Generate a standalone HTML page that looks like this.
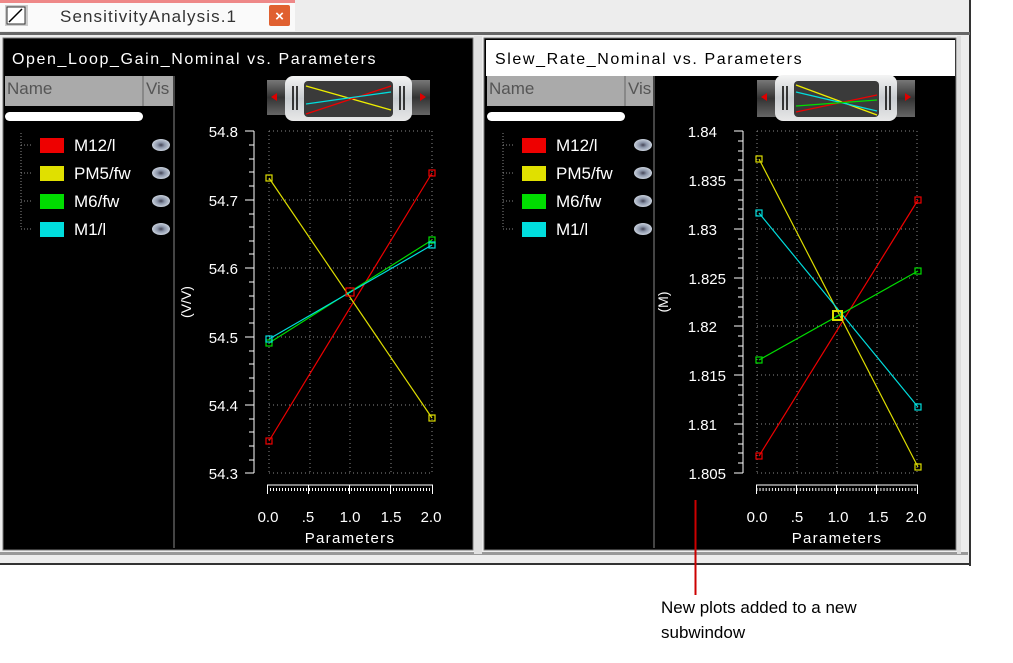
<!DOCTYPE html>
<html><head><meta charset="utf-8"><style>
html,body{margin:0;padding:0;background:#fff;}
svg{display:block;font-family:"Liberation Sans",sans-serif;}
</style></head><body>
<svg width="1013" height="663" viewBox="0 0 1013 663" xmlns="http://www.w3.org/2000/svg">
<defs>
<pattern id="rl" width="3" height="8" patternUnits="userSpaceOnUse"><rect x="0" y="0" width="1" height="6" fill="#fff"/></pattern>
<pattern id="rr" width="3.1" height="8" patternUnits="userSpaceOnUse"><rect x="0" y="0" width="1" height="6" fill="#fff"/></pattern>
<linearGradient id="knob" x1="0" y1="0" x2="0" y2="1"><stop offset="0" stop-color="#f4f4f4"/><stop offset="0.5" stop-color="#c8ccd0"/><stop offset="1" stop-color="#e8e8e8"/></linearGradient>
<linearGradient id="trk" x1="0" y1="0" x2="0" y2="1"><stop offset="0" stop-color="#777"/><stop offset="0.5" stop-color="#333"/><stop offset="1" stop-color="#666"/></linearGradient>
<radialGradient id="eye"><stop offset="0" stop-color="#445"/><stop offset="0.4" stop-color="#8a94a8"/><stop offset="1" stop-color="#c8d0dc"/></radialGradient>
</defs>
<rect x="0" y="0" width="1013" height="663" fill="#fff"/>
<rect x="0" y="0" width="970" height="565" fill="#ededed"/>
<rect x="969" y="0" width="2" height="566" fill="#333"/>
<rect x="0" y="563" width="971" height="2" fill="#333"/>
<rect x="0" y="552" width="968" height="3" fill="#999"/>
<rect x="0" y="0" width="295" height="31" fill="#fafafa"/>
<rect x="0" y="0" width="295" height="3" fill="#e88"/>
<rect x="5" y="5" width="23" height="21" fill="#ccc"/>
<rect x="7" y="7" width="18" height="17" fill="#fff" stroke="#333" stroke-width="1"/>
<line x1="9" y1="22" x2="22" y2="9" stroke="#000" stroke-width="1.5"/>
<text x="60" y="22" font-size="17" fill="#333" letter-spacing="1.1">SensitivityAnalysis.1</text>
<rect x="269" y="5" width="21" height="21" rx="2" fill="#e06030"/>
<text x="279.5" y="21" font-size="15" font-weight="bold" fill="#fff" text-anchor="middle">×</text>
<rect x="0" y="32" width="970" height="3" fill="#666"/>
<rect x="3" y="38" width="470" height="512" fill="#000" stroke="#777"/>
<text x="12" y="64" font-size="16" fill="#fff" letter-spacing="1.6">Open_Loop_Gain_Nominal vs. Parameters</text>
<rect x="5" y="76" width="169" height="30" fill="#aaa"/>
<rect x="142" y="76" width="2" height="30" fill="#888"/>
<text x="7" y="94" font-size="17" fill="#555">Name</text>
<text x="146" y="94" font-size="17" fill="#555">Vis</text>
<rect x="173" y="76" width="2" height="472" fill="#444"/>
<rect x="5" y="112" width="138" height="9" rx="4.5" fill="#fff"/>
<rect x="484" y="38" width="472" height="512" fill="#000" stroke="#777"/>
<rect x="486" y="40" width="469" height="36" fill="#fff"/>
<text x="495" y="64" font-size="16" fill="#000" letter-spacing="1.6">Slew_Rate_Nominal vs. Parameters</text>
<rect x="487" y="76" width="167" height="30" fill="#aaa"/>
<rect x="624" y="76" width="2" height="30" fill="#888"/>
<text x="489" y="94" font-size="17" fill="#555">Name</text>
<text x="628" y="94" font-size="17" fill="#555">Vis</text>
<rect x="653" y="76" width="2" height="472" fill="#444"/>
<rect x="487" y="112" width="138" height="9" rx="4.5" fill="#fff"/>
<rect x="474" y="36" width="8" height="518" fill="#e0e0e0"/>
<rect x="957" y="36" width="4" height="518" fill="#ddd"/>

<g font-size="17" fill="#fff">
<path d="M21,133 V229 M21,145 H33 M21,173 H33 M21,201 H33 M21,229 H33" stroke="#888" stroke-dasharray="1,2" fill="none"/>
<rect x="40" y="138" width="24" height="15" fill="#e00"/><text x="74" y="151">M12/l</text>
<rect x="40" y="166" width="24" height="15" fill="#e0e000"/><text x="74" y="179">PM5/fw</text>
<rect x="40" y="194" width="24" height="15" fill="#00dd00"/><text x="74" y="207">M6/fw</text>
<rect x="40" y="222" width="24" height="15" fill="#00dddd"/><text x="74" y="235">M1/l</text>
<g fill="url(#eye)"><ellipse cx="161" cy="145" rx="9" ry="6"/><ellipse cx="161" cy="173" rx="9" ry="6"/><ellipse cx="161" cy="201" rx="9" ry="6"/><ellipse cx="161" cy="229" rx="9" ry="6"/></g>
</g>
<g font-size="17" fill="#fff" transform="translate(482,0)">
<path d="M21,133 V229 M21,145 H33 M21,173 H33 M21,201 H33 M21,229 H33" stroke="#888" stroke-dasharray="1,2" fill="none"/>
<rect x="40" y="138" width="24" height="15" fill="#e00"/><text x="74" y="151">M12/l</text>
<rect x="40" y="166" width="24" height="15" fill="#e0e000"/><text x="74" y="179">PM5/fw</text>
<rect x="40" y="194" width="24" height="15" fill="#00dd00"/><text x="74" y="207">M6/fw</text>
<rect x="40" y="222" width="24" height="15" fill="#00dddd"/><text x="74" y="235">M1/l</text>
<g fill="url(#eye)"><ellipse cx="161" cy="145" rx="9" ry="6"/><ellipse cx="161" cy="173" rx="9" ry="6"/><ellipse cx="161" cy="201" rx="9" ry="6"/><ellipse cx="161" cy="229" rx="9" ry="6"/></g>
</g>

<g transform="translate(267,80)">
<rect x="0" y="0" width="163" height="35" fill="url(#trk)"/>
<polygon points="4,17 10,13 10,21" fill="#d00"/><polygon points="159,17 153,13 153,21" fill="#d00"/>
<rect x="18" y="-4" width="127" height="45" rx="8" fill="url(#knob)"/>
<rect x="37" y="1" width="89" height="36" rx="4" fill="#3a3a3a"/>
<path d="M26,6 V30 M30,6 V30 M133,6 V30 M137,6 V30" stroke="#000" stroke-width="1.5"/>
<line x1="39" y1="6" x2="124" y2="30" stroke="#ee0" stroke-width="1.3"/>
<line x1="39" y1="34" x2="124" y2="6" stroke="#e00" stroke-width="1.3"/>
<line x1="39" y1="24" x2="124" y2="12" stroke="#0dd" stroke-width="1.3"/>
</g>
<g transform="translate(757,80)">
<rect x="0" y="0" width="158" height="37" fill="url(#trk)"/>
<polygon points="4,17 10,13 10,21" fill="#d00"/><polygon points="154,17 148,13 148,21" fill="#d00"/>
<rect x="18" y="-5" width="122" height="46" rx="8" fill="url(#knob)"/>
<rect x="37" y="1" width="85" height="36" rx="4" fill="#3a3a3a"/>
<path d="M26,6 V30 M30,6 V30 M129,6 V30 M133,6 V30" stroke="#000" stroke-width="1.5"/>
<line x1="39" y1="5" x2="120" y2="35" stroke="#ee0" stroke-width="1.3"/>
<line x1="39" y1="12" x2="120" y2="31" stroke="#0dd" stroke-width="1.3"/>
<line x1="39" y1="32" x2="120" y2="15" stroke="#e00" stroke-width="1.3"/>
<line x1="39" y1="26" x2="120" y2="20" stroke="#0d0" stroke-width="1.3"/>
</g>

<g stroke="#888" stroke-dasharray="1,3" fill="none">
<path d="M269,131 H432 M269,200 H432 M269,268 H432 M269,337 H432 M269,405 H432 M269,473 H432"/>
<path d="M269,131 V473 M310,131 V473 M350,131 V473 M391,131 V473 M432,131 V473"/>
</g>
<g stroke="#fff" fill="none">
<path d="M254,131 V473 M245,131 H254 M245,200 H254 M245,268 H254 M245,337 H254 M245,405 H254 M245,473 H254"/>
<path d="M249,145 H254 M249,159 H254 M249,172 H254 M249,186 H254 M249,214 H254 M249,227 H254 M249,241 H254 M249,254 H254 M249,282 H254 M249,296 H254 M249,309 H254 M249,323 H254 M249,351 H254 M249,364 H254 M249,378 H254 M249,391 H254 M249,419 H254 M249,432 H254 M249,446 H254 M249,460 H254"/>
<path d="M267,485 H433 M267.5,485 V494 M308.5,485 V494 M349.5,485 V494 M390.5,485 V494 M432.5,485 V494"/>
</g>
<rect x="268" y="486" width="165" height="5" fill="url(#rl)"/>
<g fill="#fff" font-size="15" text-anchor="end">
<text x="238" y="137">54.8</text><text x="238" y="206">54.7</text><text x="238" y="274">54.6</text><text x="238" y="343">54.5</text><text x="238" y="411">54.4</text><text x="238" y="479">54.3</text>
</g>
<g fill="#fff" font-size="15" text-anchor="middle">
<text x="268" y="522">0.0</text><text x="308" y="522">.5</text><text x="350" y="522">1.0</text><text x="391" y="522">1.5</text><text x="431" y="522">2.0</text>
<text x="350" y="543" letter-spacing="1.3">Parameters</text>
<text transform="translate(191,302) rotate(-90)" font-size="14">(V/V)</text>
</g>
<g stroke-width="1.2" fill="none">
<line x1="269" y1="441" x2="432" y2="173" stroke="#e00"/>
<line x1="269" y1="178" x2="432" y2="418" stroke="#dd0"/>
<line x1="269" y1="343" x2="432" y2="240" stroke="#0d0"/>
<line x1="269" y1="339" x2="432" y2="245" stroke="#0dd"/>
<rect x="266" y="438" width="6" height="6" stroke="#e00"/><rect x="429" y="170" width="6" height="6" stroke="#e00"/>
<rect x="266" y="175" width="6" height="6" stroke="#dd0"/><rect x="429" y="415" width="6" height="6" stroke="#dd0"/>
<rect x="266" y="340" width="6" height="6" stroke="#0d0"/><rect x="429" y="237" width="6" height="6" stroke="#0d0"/>
<rect x="266" y="336" width="6" height="6" stroke="#0dd"/><rect x="429" y="242" width="6" height="6" stroke="#0dd"/>
<rect x="346" y="288" width="8" height="8" stroke="#e00"/>
</g>

<g stroke="#888" stroke-dasharray="1,3" fill="none">
<path d="M757,131 H917 M757,180 H917 M757,229 H917 M757,278 H917 M757,326 H917 M757,375 H917 M757,424 H917 M757,473 H917"/>
<path d="M757,131 V473 M797,131 V473 M837,131 V473 M877,131 V473 M917,131 V473"/>
</g>
<g stroke="#fff" fill="none">
<path d="M743,131 V473 M734,131 H743 M734,180 H743 M734,229 H743 M734,278 H743 M734,326 H743 M734,375 H743 M734,424 H743 M734,473 H743"/>
<path d="M738,141 H743 M738,151 H743 M738,160 H743 M738,170 H743 M738,190 H743 M738,200 H743 M738,209 H743 M738,219 H743 M738,239 H743 M738,249 H743 M738,258 H743 M738,268 H743 M738,288 H743 M738,297 H743 M738,307 H743 M738,317 H743 M738,336 H743 M738,346 H743 M738,356 H743 M738,366 H743 M738,385 H743 M738,395 H743 M738,405 H743 M738,414 H743 M738,434 H743 M738,444 H743 M738,453 H743 M738,463 H743"/>
<path d="M756,485 H918 M756.5,485 V494 M796.5,485 V494 M836.5,485 V494 M876.5,485 V494 M917.5,485 V494"/>
</g>
<rect x="757" y="486" width="160" height="5" fill="url(#rr)"/>
<g fill="#fff" font-size="15" text-anchor="end">
<text x="717" y="137">1.84</text><text x="726" y="186">1.835</text><text x="717" y="235">1.83</text><text x="726" y="284">1.825</text><text x="717" y="332">1.82</text><text x="726" y="381">1.815</text><text x="717" y="430">1.81</text><text x="726" y="479">1.805</text>
</g>
<g fill="#fff" font-size="15" text-anchor="middle">
<text x="757" y="522">0.0</text><text x="797" y="522">.5</text><text x="838" y="522">1.0</text><text x="878" y="522">1.5</text><text x="916" y="522">2.0</text>
<text x="837" y="543" letter-spacing="1.3">Parameters</text>
<text transform="translate(668,302) rotate(-90)" font-size="14">(M)</text>
</g>
<g stroke-width="1.2" fill="none">
<line x1="759" y1="456" x2="918" y2="200" stroke="#e00"/>
<line x1="759" y1="159" x2="918" y2="467" stroke="#dd0"/>
<line x1="759" y1="360" x2="918" y2="271" stroke="#0d0"/>
<line x1="759" y1="213" x2="918" y2="407" stroke="#0dd"/>
<rect x="756" y="453" width="6" height="6" stroke="#e00"/><rect x="915" y="197" width="6" height="6" stroke="#e00"/>
<rect x="756" y="156" width="6" height="6" stroke="#dd0"/><rect x="915" y="464" width="6" height="6" stroke="#dd0"/>
<rect x="756" y="357" width="6" height="6" stroke="#0d0"/><rect x="915" y="268" width="6" height="6" stroke="#0d0"/>
<rect x="756" y="210" width="6" height="6" stroke="#0dd"/><rect x="915" y="404" width="6" height="6" stroke="#0dd"/>
<rect x="833" y="311" width="9" height="9" stroke="#dd0" stroke-width="2"/>
</g>

<line x1="695.5" y1="500" x2="695.5" y2="595" stroke="#c00" stroke-width="2"/>
<text x="661" y="613" font-size="17" fill="#000">New plots added to a new</text>
<text x="661" y="638" font-size="17" fill="#000">subwindow</text>
</svg>
</body></html>
